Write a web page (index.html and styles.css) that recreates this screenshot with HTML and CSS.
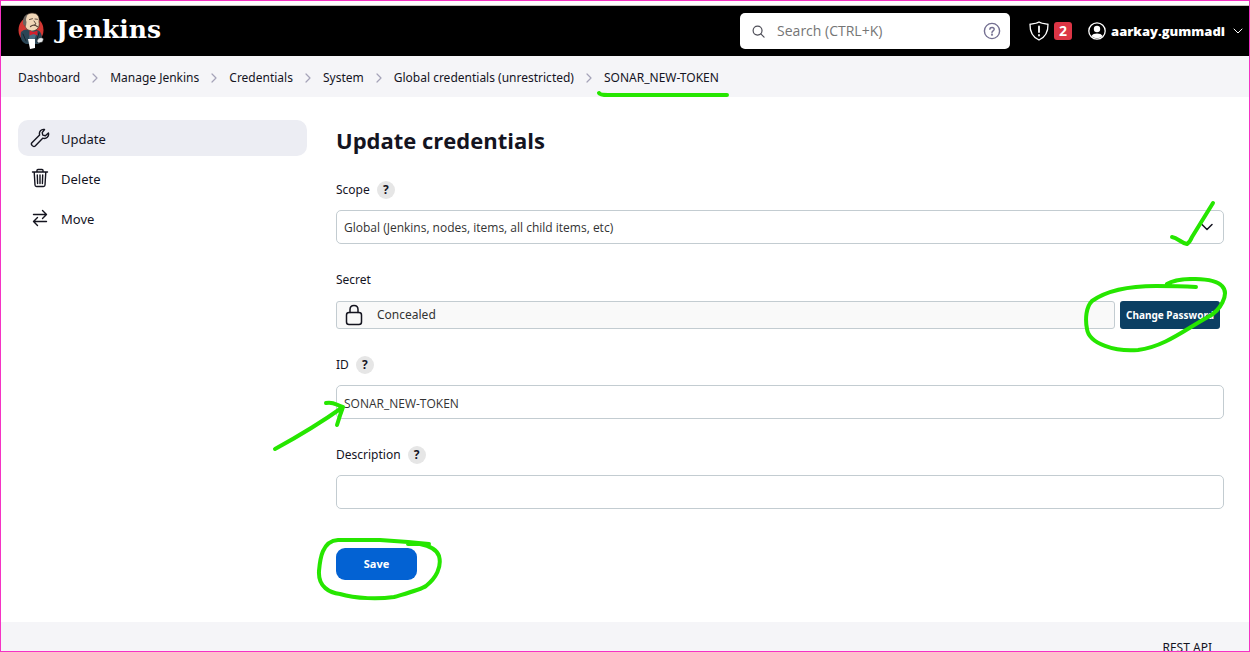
FILE: index.html
```html
<!DOCTYPE html>
<html lang="en">
<head>
<meta charset="utf-8">
<meta name="viewport" content="width=device-width, initial-scale=1">
<title>Update credentials - Jenkins</title>
<link rel="stylesheet" href="styles.css">
</head>
<body>
<div class="page">
  <header class="header">
    <a class="brand" href="#">
      <svg class="brand-face" viewBox="0 0 26 38" aria-hidden="true">
        <ellipse cx="13" cy="18" rx="12.5" ry="13.500" fill="#d33833"/>
        <path d="M3 20 C6 17 9 17 11 18 L19 18 C23 19 24 23 24 27 L21 32 L8 32 C3 30 2 25 3 20Z" fill="#2b4656"/>
        <path d="M5 22l3 7M21 21l-2 6" stroke="#14242e" stroke-width="1"/>
        <path d="M6 10 C6 4 10 1 14 1 C19 1 22 4 21 10 C22 14 20 18 15 19 C11 19 7 17 7 13Z" fill="#f0d6b7" stroke="#3b2b22" stroke-width=".7"/>
        <path d="M5.500 13 C4 8 6 3 10 2 C8 5 7.500 8 8.500 10 L8 14Z" fill="#6d6660"/>
        <path d="M11.500 7.500l3-.8M17 7l2.500.3M16 9l2 3-1.500.8" fill="none" stroke="#3b2b22" stroke-width=".8"/>
        <path d="M12.500 14.500c2-1.700 5-1.500 7 .2" fill="none" stroke="#57443a" stroke-width="1.2"/>
        <path d="M12 19l-1 8 5 2 3-9z" fill="#4c6e83"/>
        <path d="M11.500 18.500l4 1.500 4-1.500v5l-4-1.500-4 1.500z" fill="#d31f2c"/>
        <path d="M10 27h7v9l-5 1z" fill="#fff"/>
        <path d="M19 29c1-4 5-4 6.500-2l-1 3-4 1z" fill="#e7eaec" stroke="#222" stroke-width=".5"/>
      </svg>
      <span class="brand-name">Jenkins</span>
    </a>
    <div class="header-tools">
      <label class="search">
        <svg class="search-icon" viewBox="0 0 14 14" aria-hidden="true"><circle cx="6" cy="6" r="4.8"/><path d="M9.500 9.500L13 13"/></svg>
        <input class="search-input" type="text" aria-label="Search" placeholder="Search (CTRL+K)">
        <a class="search-help" href="#" aria-label="Search help">
          <svg viewBox="0 0 18 18"><circle cx="9" cy="9" r="7.6"/><path d="M6.9 7.2C7 5 11.200 5 11.200 7.300C11.200 8.800 9 8.900 9 10.500"/><circle class="dot" cx="9" cy="12.700" r=".4"/></svg>
        </a>
      </label>
      <a class="alerts" href="#" aria-label="2 security warnings">
        <svg viewBox="0 0 20 20" aria-hidden="true"><path d="M10 1C7.500 2.500 4 2.800 1 3.200C.8 10 2.500 15.500 10 19C17.500 15.500 19.200 10 19 3.200C16 2.800 12.500 2.500 10 1Z"/><path class="mark" d="M10 5.500v5.500M10 14v.5"/></svg>
        <span class="badge">2</span>
      </a>
      <button class="user" type="button">
        <svg class="user-icon" viewBox="0 0 18 18" aria-hidden="true"><circle cx="9" cy="9" r="8.200"/><circle class="fill" cx="9" cy="7" r="3.200"/><path class="fill" d="M3.500 14C5 10.700 13 10.700 14.500 14C12 17 6 17 3.500 14Z"/></svg>
        <span>aarkay.gummadi</span>
        <svg class="user-chevron" viewBox="0 0 10 6" aria-hidden="true"><path d="M1 1l4 4 4-4"/></svg>
      </button>
    </div>
  </header>

  <nav class="crumbs" aria-label="Breadcrumb">
    <a href="#">Dashboard</a>
    <svg class="sep" viewBox="0 0 6 10" aria-hidden="true"><path d="M1 1l4 4-4 4"/></svg>
    <a href="#">Manage Jenkins</a>
    <svg class="sep" viewBox="0 0 6 10" aria-hidden="true"><path d="M1 1l4 4-4 4"/></svg>
    <a href="#">Credentials</a>
    <svg class="sep" viewBox="0 0 6 10" aria-hidden="true"><path d="M1 1l4 4-4 4"/></svg>
    <a href="#">System</a>
    <svg class="sep" viewBox="0 0 6 10" aria-hidden="true"><path d="M1 1l4 4-4 4"/></svg>
    <a href="#">Global credentials (unrestricted)</a>
    <svg class="sep" viewBox="0 0 6 10" aria-hidden="true"><path d="M1 1l4 4-4 4"/></svg>
    <a class="current" href="#">SONAR_NEW-TOKEN
      <svg class="ink ink-underline" viewBox="0 0 134 8" aria-hidden="true"><path d="M3 3Q4 5 12 5L131 5"/></svg>
    </a>
  </nav>

  <div class="body">
    <nav class="tasks" aria-label="Tasks">
      <a class="task active" href="#">
        <svg viewBox="0 0 20 20" aria-hidden="true"><path d="M14.500 1.500C11.200 .8 8.700 3.700 9.600 7L1.900 14.700C.3 16.500 3.300 19.600 5.200 18L12.700 10.200C16.400 11.300 19.400 8.400 18.400 4.900L15.400 7.700L12.800 7.100L12.200 4.600Z"/></svg>
        <span>Update</span>
      </a>
      <a class="task" href="#">
        <svg viewBox="0 0 20 20" aria-hidden="true"><path d="M2.500 4h15M7 4V2.300Q7 1.500 8 1.500h4q1 0 1 .8V4M4.200 4l.8 13q.1 1.500 1.500 1.500h7q1.400 0 1.500-1.500l.8-13M7.300 7l.3 8.500M10 7v8.500M12.700 7l-.3 8.500"/></svg>
        <span>Delete</span>
      </a>
      <a class="task" href="#">
        <svg viewBox="0 0 20 20" aria-hidden="true"><path d="M3.500 6.500h13M12.500 2.500l4 4-4 4M16.500 13.500h-13M7.500 9.500l-4 4 4 4"/></svg>
        <span>Move</span>
      </a>
    </nav>

    <main class="content">
      <h1 class="title">Update credentials</h1>
      <form class="form">
        <div class="group">
          <div class="label-row">
            <label for="scope">Scope</label>
            <button class="help" type="button" aria-label="Help for Scope">?</button>
          </div>
          <div class="control">
            <select id="scope" class="field">
              <option>Global (Jenkins, nodes, items, all child items, etc)</option>
            </select>
            <svg class="select-chevron" viewBox="0 0 12 8" aria-hidden="true"><path d="M1 1.500l5 5 5-5"/></svg>
            <svg class="ink ink-check" viewBox="0 0 48 48" aria-hidden="true"><path d="M4 37C10 38 13 43 19 44Q22 42 24 37L45 3"/></svg>
          </div>
        </div>

        <div class="group">
          <div class="label-row"><span>Secret</span></div>
          <div class="secret">
            <div class="secret-box">
              <svg viewBox="0 0 18 22" aria-hidden="true"><rect x="1.500" y="8.500" width="15" height="12" rx="2.500"/><path d="M5 8.500V5.500C5 0 13 0 13 5.500V8.500"/></svg>
              <span>Concealed</span>
            </div>
            <button class="change" type="button">Change Password</button>
            <svg class="ink ink-loop" viewBox="0 0 144 76" aria-hidden="true"><path d="M83 7C94 0 130 0 138 9C146 17 136 34 124 40C102 52 80 70 54 73C32 75 5 67 3 52C1 42 2 30 8 24C22 14 45 9 72 9Q95 9 112 10"/></svg>
          </div>
        </div>

        <div class="group">
          <div class="label-row">
            <label for="cred-id">ID</label>
            <button class="help" type="button" aria-label="Help for ID">?</button>
          </div>
          <div class="control">
            <input id="cred-id" class="field" type="text" value="SONAR_NEW-TOKEN" readonly>
            <svg class="ink ink-arrow" viewBox="0 0 74 54" aria-hidden="true"><path d="M3 50C25 38 47 25 71 8M54 4C62 2 65 7 71 8Q68 16 65 26"/></svg>
          </div>
        </div>

        <div class="group">
          <div class="label-row">
            <label for="description">Description</label>
            <button class="help" type="button" aria-label="Help for Description">?</button>
          </div>
          <input id="description" class="field" type="text">
        </div>

        <div class="actions">
          <button class="save" type="submit">Save</button>
          <svg class="ink ink-ring" viewBox="0 0 126 64" aria-hidden="true"><path d="M92 7H113L92 5L64 3H22C6 4 4 22 3 34C2 50 14 56 24 57C40 62 64 62 78 60C88 57 104 53 110 49C120 41 126 30 123 19C121 13 114 9 104 7"/></svg>
        </div>
      </form>
    </main>
  </div>

  <footer class="footer"><a href="#">REST API</a></footer>
</div>
<div class="frame" aria-hidden="true"></div>
</body>
</html>
```
FILE: styles.css
```css
* { box-sizing: border-box; }

body {
  margin: 0;
  overflow: hidden;
  background: #fff;
  color: #14141f;
  font: 12px/20px "Noto Sans", "Open Sans", sans-serif;
}

a { color: inherit; text-decoration: none; }
button, input, select { font: inherit; color: inherit; }
svg {
  display: block;
  flex: none;
  fill: none;
  stroke: currentColor;
  stroke-linecap: round;
  stroke-linejoin: round;
}

.page { padding: 5px 1px 0; }

/* Thin outline round the whole window */
.frame {
  position: fixed;
  inset: 0;
  border: 1px solid #f533c4;
  pointer-events: none;
}

/* Header */
.header {
  display: flex;
  align-items: center;
  justify-content: space-between;
  height: 51px;
  padding: 0 6px 0 17px;
  border-top: 1px solid #c8c8c0;
  background: #000;
  color: #fff;
}
.brand { display: flex; align-items: center; gap: 12px; }
.brand-face { width: 26px; height: 38px; stroke: none; }
.brand-name { padding-bottom: 2px; font: bold 25px/34px "DejaVu Serif", serif; }
.header-tools { display: flex; align-items: center; }
.search {
  display: flex;
  align-items: center;
  width: 270px;
  height: 36px;
  padding: 0 9px 0 12px;
  border-radius: 5px;
  background: #fff;
}
.search-icon { width: 13px; height: 13px; color: #4d4d57; stroke-width: 1.3; }
.search-input {
  flex: 1;
  min-width: 0;
  margin-left: 12px;
  padding: 0;
  border: 0;
  outline: 0;
  background: none;
  font-family: "Open Sans", sans-serif;
  font-size: 14px;
}
.search-input::placeholder { color: #757575; opacity: 1; }
.search-help { color: #736f91; }
.search-help svg { width: 18px; height: 18px; stroke-width: 1.4; }
.alerts { display: flex; align-items: center; gap: 5px; margin-left: 19px; }
.alerts svg { width: 20px; height: 20px; stroke-width: 1.3; }
.alerts .mark { stroke-width: 1.8; }
.badge {
  width: 18px;
  border-radius: 3px;
  background: #dc3545;
  font-size: 14px;
  font-weight: 700;
  line-height: 18px;
  text-align: center;
}
.user {
  display: flex;
  align-items: center;
  margin-left: 16px;
  padding: 0;
  border: 0;
  background: none;
  color: #fff;
  font-family: "Open Sans", sans-serif;
  font-size: 13px;
  font-weight: 800;
}
.user-icon { width: 18px; height: 18px; margin-right: 5px; stroke-width: 1.3; }
.fill { fill: currentColor; stroke: none; }
.user-chevron { width: 10px; height: 6px; margin-left: 8px; }

/* Breadcrumbs */
.crumbs {
  display: flex;
  align-items: center;
  gap: 12px;
  height: 41px;
  padding: 2px 17px 0;
  background: #f5f5f8;
}
.sep { width: 6px; height: 10px; color: #a5a3b8; stroke-width: 1.2; }
.current { position: relative; }

/* Body */
.body { display: flex; gap: 29px; padding: 23px 25px 42px 17px; }
.tasks { display: flex; flex-direction: column; flex: none; gap: 4px; width: 289px; }
.task {
  display: flex;
  align-items: center;
  gap: 11px;
  height: 36px;
  padding: 0 12px;
  border-radius: 10px;
  font-size: 13px;
}
.task svg { width: 20px; height: 20px; stroke-width: 1.4; }
.task span { padding-top: 2px; }
.active { background: #ecedf3; }

.content { flex: 1; min-width: 0; }
.title {
  margin: 4px 0 24px;
  font: 700 22px/32px "Open Sans", sans-serif;
}
.form { display: flex; flex-direction: column; gap: 26px; }
.label-row { display: flex; align-items: center; gap: 7px; height: 20px; margin-bottom: 10px; }
.help {
  width: 18px;
  height: 18px;
  padding: 0;
  border: 0;
  border-radius: 50%;
  background: #e6e6e6;
  font-size: 12px;
  font-weight: 700;
  line-height: 18px;
  text-align: center;
}
.control { position: relative; }
.field {
  display: block;
  width: 100%;
  height: 34px;
  padding: 2px 7px 0;
  border: 1px solid #c3ccd1;
  border-radius: 5px;
  outline: 0;
  background: #fff;
  color: #333;
  font-family: "Open Sans", sans-serif;
  appearance: none;
}
.select-chevron {
  position: absolute;
  right: 11px;
  top: 13px;
  width: 12px;
  height: 8px;
  stroke-width: 1.5;
}
.secret { position: relative; display: flex; gap: 5px; padding: 1px 4px 0 0; }
.secret-box {
  display: flex;
  flex: 1;
  align-items: center;
  gap: 14px;
  height: 28px;
  padding: 0 8px;
  border: 1px solid #c3ccd1;
  border-radius: 3px;
  background: #f9f9f9;
  color: #333;
}
.secret-box svg { width: 18px; height: 22px; color: #14141f; stroke-width: 1.5; }
.change {
  flex: none;
  height: 28px;
  padding: 0 6px;
  border: 0;
  border-radius: 3px;
  background: #0b3f63;
  color: #fff;
  font-size: 10px;
  font-weight: 700;
}
.actions { position: relative; padding-top: 13px; }
.save {
  display: block;
  width: 81px;
  height: 32px;
  padding: 0;
  border: 0;
  border-radius: 9px;
  background: #0362d3;
  color: #fff;
  font-size: 11px;
  font-weight: 700;
}

.footer {
  padding: 16px 37px 20px;
  background: #f5f5f8;
  text-align: right;
}

/* Hand-drawn marks lying over the controls */
.ink {
  position: absolute;
  z-index: 1;
  color: #26e600;
  stroke-width: 4;
  pointer-events: none;
}
.ink-underline { left: -8px; top: 22px; width: 134px; height: 8px; }
.ink-check { right: 8px; top: -10px; width: 48px; height: 48px; }
.ink-loop { right: -4px; top: -23px; width: 144px; height: 76px; }
.ink-arrow { left: -64px; top: 14px; width: 74px; height: 54px; }
.ink-ring { left: -20px; top: 2px; width: 126px; height: 64px; }
```
